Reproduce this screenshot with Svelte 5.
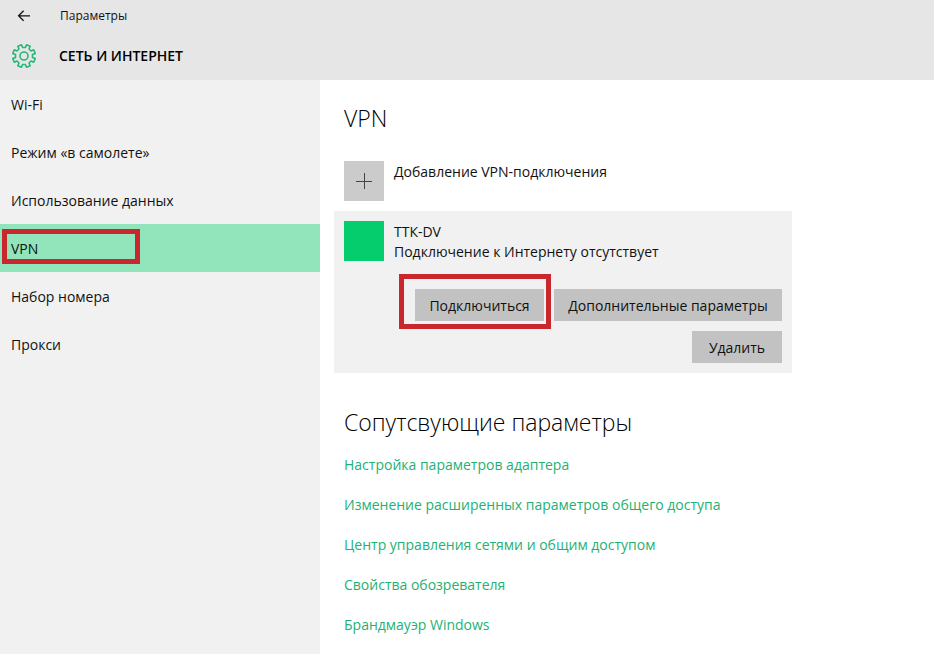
<script>
  const sections = [
    'Wi-Fi',
    'Режим «в самолете»',
    'Использование данных',
    'VPN',
    'Набор номера',
    'Прокси'
  ];
  const links = [
    'Настройка параметров адаптера',
    'Изменение расширенных параметров общего доступа',
    'Центр управления сетями и общим доступом',
    'Свойства обозревателя',
    'Брандмауэр Windows'
  ];
  let current = $state('VPN');

  function gearPath(teeth, outer, inner) {
    const step = 360 / teeth;
    const points = [];
    for (let i = 0; i < teeth; i++) {
      const mid = step / 2 + i * step;
      for (const [offset, radius] of [[-13, inner], [-10, outer], [10, outer], [13, inner]]) {
        const a = ((mid + offset) * Math.PI) / 180;
        points.push(`${(14 + radius * Math.sin(a)).toFixed(2)} ${(14 - radius * Math.cos(a)).toFixed(2)}`);
      }
    }
    return `M${points.join('L')}Z`;
  }
  const gear = gearPath(8, 11.5, 8.6);
</script>

<div class="app">
  <header>
    <div class="titlebar">
      <button class="back" aria-label="Назад">
        <svg width="14" height="12" viewBox="0 0 14 12" fill="none" stroke="#111" stroke-width="1.3">
          <path d="M6.6 .8 1.6 5.8l5 5M1.6 5.8H13" />
        </svg>
      </button>
      <span>Параметры</span>
    </div>
    <div class="heading">
      <svg width="28" height="28" viewBox="0 0 28 28" fill="none" stroke="#25b878" stroke-width="1.6" stroke-linejoin="round">
        <path d={gear} />
        <circle cx="14" cy="14" r="4" />
      </svg>
      <h1>СЕТЬ И ИНТЕРНЕТ</h1>
    </div>
  </header>

  <div class="body">
    <nav>
      {#each sections as name}
        <button class="item" class:active={name === current} onclick={() => (current = name)}>
          {name}
          {#if name === 'VPN'}<span class="mark mark-nav"></span>{/if}
        </button>
      {/each}
    </nav>

    <main>
      <h2>VPN</h2>
      <button class="add">
        <span class="tile">
          <svg width="16" height="16" viewBox="0 0 16 16" stroke="#444" stroke-width="1">
            <path d="M8.5 0V16M0 8.5H16" />
          </svg>
        </span>
        <span class="info">Добавление VPN-подключения</span>
      </button>

      <section class="card">
        <div class="connection">
          <span class="tile green"></span>
          <div class="info">
            <div>ТТК-DV</div>
            <div>Подключение к Интернету отсутствует</div>
          </div>
        </div>
        <div class="actions">
          <div class="connect">
            <button class="action">Подключиться</button>
            <span class="mark mark-connect"></span>
          </div>
          <button class="action more">Дополнительные параметры</button>
          <button class="action remove">Удалить</button>
        </div>
      </section>

      <h2 class="related">Сопутсвующие параметры</h2>
      <ul>
        {#each links as link}
          <li><a href="#settings">{link}</a></li>
        {/each}
      </ul>
    </main>
  </div>
</div>

<style>
  :global(body) {
    margin: 0;
    background: #fff;
  }
  .app {
    display: flex;
    flex-direction: column;
    min-height: 100vh;
    font: 14px/20px 'Open Sans', 'Noto Sans', sans-serif;
    color: #111;
  }
  button {
    margin: 0;
    padding: 0;
    border: 0;
    background: none;
    font: inherit;
    color: inherit;
    text-align: left;
  }
  header {
    background: #e6e6e6;
    height: 80px;
  }
  .titlebar {
    display: flex;
    align-items: center;
    height: 32px;
    font-size: 12px;
  }
  .back {
    display: flex;
    justify-content: center;
    width: 48px;
    margin-right: 12px;
  }
  .heading {
    display: flex;
    align-items: center;
    height: 48px;
    padding-left: 10px;
    gap: 21px;
  }
  h1 {
    margin: 0;
    font-size: 14px;
    font-weight: 600;
    color: #000;
  }
  .body {
    display: flex;
    flex: 1;
  }
  nav {
    flex: 0 0 320px;
    background: #f1f1f1;
  }
  .item {
    display: block;
    position: relative;
    width: 100%;
    height: 48px;
    padding: 2px 0 0 11px;
  }
  .active {
    background: #92e5bb;
  }
  .mark {
    position: absolute;
    box-sizing: border-box;
    border: 5px solid #c8272d;
    pointer-events: none;
  }
  .mark-nav {
    left: 2px;
    top: 5px;
    width: 138px;
    height: 35px;
  }
  main {
    flex: 1;
    padding: 22px 14px 10px;
  }
  h2 {
    margin: 0 10px;
    font-size: 23px;
    line-height: 32px;
    font-weight: 300;
    color: #000;
  }
  .add {
    display: flex;
    gap: 10px;
    margin: 27px 10px 10px;
  }
  .info {
    padding-top: 1px;
  }
  .tile {
    display: flex;
    flex: none;
    align-items: center;
    justify-content: center;
    width: 40px;
    height: 40px;
    background: #cbcbcb;
  }
  .green {
    background: #05cc6c;
  }
  .card {
    box-sizing: border-box;
    max-width: 458px;
    padding: 10px;
    background: #f1f1f1;
  }
  .connection {
    display: flex;
    gap: 10px;
  }
  .actions {
    display: flex;
    flex-wrap: wrap;
    justify-content: flex-end;
    gap: 10px;
    margin-top: 27px;
  }
  .connect {
    position: relative;
  }
  .action {
    height: 32px;
    padding: 2px 14px 0;
    background: #c2c2c2;
    text-align: center;
  }
  .connect .action {
    width: 129px;
  }
  .more {
    width: 228px;
  }
  .remove {
    width: 90px;
  }
  .mark-connect {
    inset: -15px -7px -8px -16px;
  }
  .related {
    margin-top: 33px;
  }
  ul {
    margin: 7px 10px 0;
    padding: 0;
    list-style: none;
  }
  li {
    height: 40px;
    line-height: 40px;
  }
  a {
    color: #1eb173;
    text-decoration: none;
  }
</style>
